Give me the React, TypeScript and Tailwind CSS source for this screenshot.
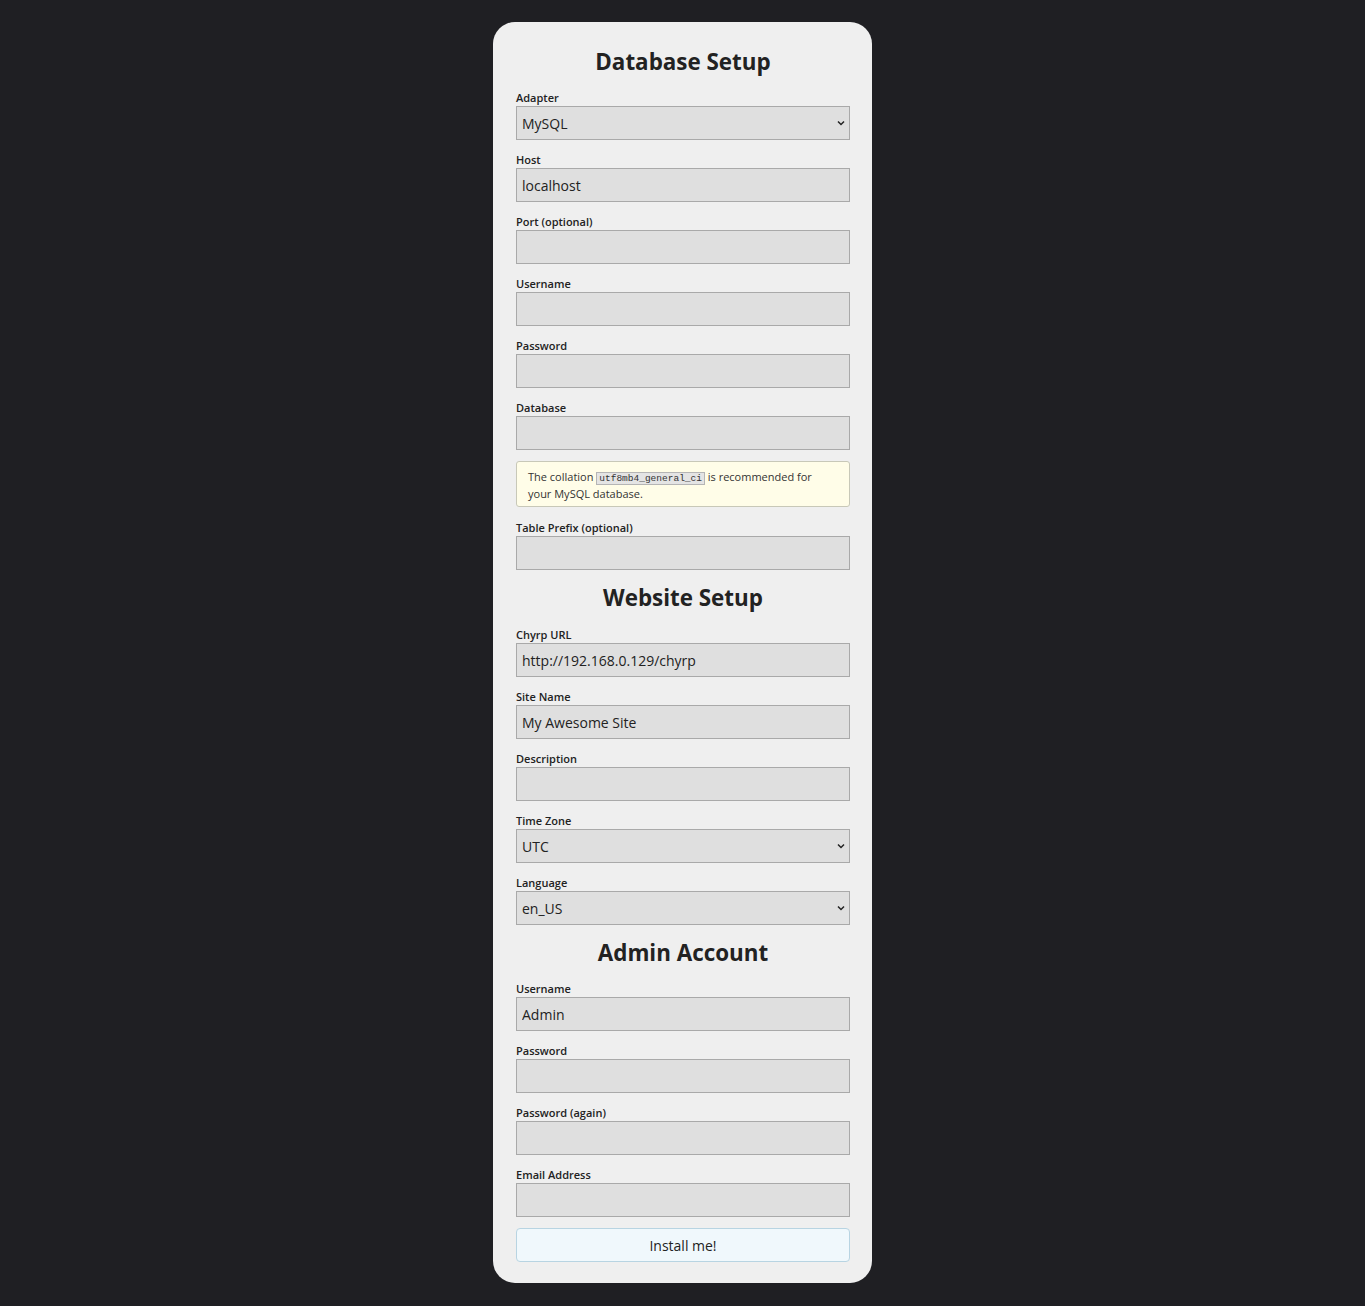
import * as React from "react";

const FONT = { fontFamily: '"Open Sans", "Noto Sans", sans-serif' };

function Chevron() {
  return (
    <svg
      className="pointer-events-none absolute right-[5px] top-1/2 -translate-y-1/2"
      width="8"
      height="6"
      viewBox="0 0 8 6"
      fill="none"
    >
      <path d="M1 1.5 L4 4.5 L7 1.5" stroke="#222" strokeWidth="1.5" />
    </svg>
  );
}

function Field({
  label,
  value = "",
  type = "text",
  options,
}: {
  label: string;
  value?: string;
  type?: string;
  options?: string[];
}) {
  return (
    <div className="mb-[12px]">
      <label className="block h-4 text-[11px] font-semibold leading-4 text-[#222]">
        {label}
      </label>
      {options ? (
        <div className="relative">
          <select
            defaultValue={value}
            className="block h-[34px] w-full appearance-none border border-[#a9a9a9] bg-[#dfdfdf] px-[5px] text-[14px] text-[#222] outline-none"
            style={FONT}
          >
            {options.map((o) => (
              <option key={o}>{o}</option>
            ))}
          </select>
          <Chevron />
        </div>
      ) : (
        <input
          type={type}
          defaultValue={value}
          className="block h-[34px] w-full border border-[#a9a9a9] bg-[#dfdfdf] px-[5px] text-[14px] text-[#222] outline-none"
          style={FONT}
        />
      )}
    </div>
  );
}

function Heading({ children, first, tight }: { children: React.ReactNode; first?: boolean; tight?: boolean }) {
  return (
    <h2
      className={
        (first ? "mb-[13px]" : tight ? "mb-[13px] -mt-[1px]" : "mb-[14px] -mt-[1px]") +
        " h-8 text-center text-[22.4px] font-bold leading-[34px] text-[#222]"
      }
    >
      {children}
    </h2>
  );
}

export default function App() {
  return (
    <main
      className="flex min-h-[1306px] justify-center bg-[#1f1f23] pt-[22px] pb-[23px]"
      style={FONT}
    >
      <form className="w-[379px] self-start rounded-[22px] bg-[#efefef] pl-[23px] pr-[22px] pt-[23px] pb-[21px]">
        <Heading first>Database Setup</Heading>
        <Field label="Adapter" value="MySQL" options={["MySQL", "SQLite", "PostgreSQL"]} />
        <Field label="Host" value="localhost" />
        <Field label="Port (optional)" />
        <Field label="Username" />
        <Field label="Password" type="password" />
        <div className="-mb-px">
          <Field label="Database" />
        </div>
        {/* collation notice */}
        <div className="mb-[13px] rounded-[3px] border border-[#c8c8b8] bg-[#fffde8] px-[11px] pt-[6px] pb-[4px] text-[11px] leading-[17px] text-[#333]">
          <div>
            <span>The collation</span>{" "}
            <code
              className="border border-[#b5b5b5] bg-[#e4e4e4] px-[2px] text-[9.5px] leading-[12px] text-[#333]"
              style={{ fontFamily: '"Liberation Mono", "DejaVu Sans Mono", monospace' }}
            >
              utf8mb4_general_ci
            </code>{" "}
            <span>is recommended for</span>
          </div>
          <div>your MySQL database.</div>
        </div>
        <Field label="Table Prefix (optional)" />
        <Heading>Website Setup</Heading>
        <Field label="Chyrp URL" value="http://192.168.0.129/chyrp" />
        <Field label="Site Name" value="My Awesome Site" />
        <Field label="Description" />
        <Field label="Time Zone" value="UTC" options={["UTC"]} />
        <Field label="Language" value="en_US" options={["en_US"]} />
        <Heading tight>Admin Account</Heading>
        <Field label="Username" value="Admin" />
        <Field label="Password" type="password" />
        <Field label="Password (again)" type="password" />
        <div className="-mb-px">
          <Field label="Email Address" />
        </div>
        <button
          type="button"
          className="block h-[34px] w-full rounded-[4px] border border-[#b8d4e2] bg-[#f0f8fc] text-[14px] text-[#222]"
          style={FONT}
        >
          Install me!
        </button>
      </form>
    </main>
  );
}
